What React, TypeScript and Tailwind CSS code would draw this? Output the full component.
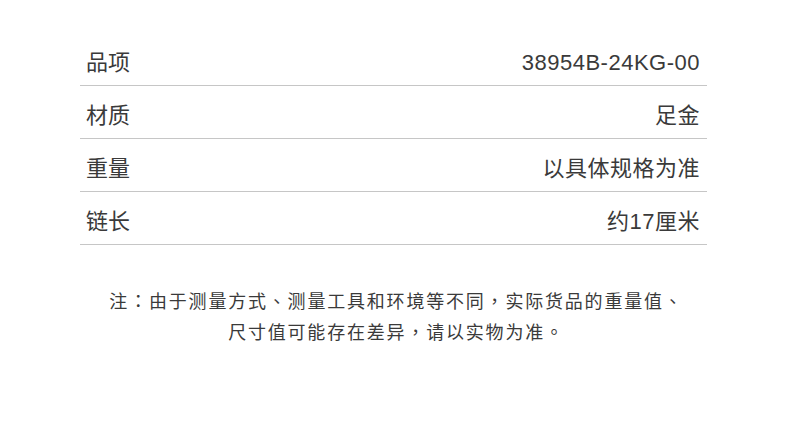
const rows = [
  { label: "品项", value: "38954B-24KG-00" },
  { label: "材质", value: "足金" },
  { label: "重量", value: "以具体规格为准" },
  { label: "链长", value: "约17厘米" },
];

// centred full-width punctuation, as in the reference
function P({ c }: { c: string }) {
  return <span className="font-['Noto_Sans_CJK_TC',sans-serif]">{c}</span>;
}

export default function App() {
  return (
    <div className="min-h-[422px] w-[790px] bg-white pt-[33px] font-['Liberation_Sans','Noto_Sans_CJK_SC',sans-serif] text-[#3a3a3a]">
      <div className="ml-[80px] w-[627px]">
        {rows.map((row) => (
          <div
            key={row.label}
            className="flex items-center justify-between border-b border-[#c6c6c6] pb-[10px] pl-[6px] pr-[7px] pt-[18px] text-[22px] leading-[24px]"
          >
            <span>{row.label}</span>
            <span className="tracking-[0.5px]">{row.value}</span>
          </div>
        ))}
      </div>
      <div className="mt-[41px] pl-[3px] text-center text-[18px] leading-[29px] tracking-[1.8px]">
        <p>
          注<P c="：" />由于测量方式<P c="、" />测量工具和环境等不同<P c="，" />实际货品的重量值<P c="、" />
        </p>
        <p>
          尺寸值可能存在差异<P c="，" />请以实物为准<P c="。" />
        </p>
      </div>
    </div>
  );
}
